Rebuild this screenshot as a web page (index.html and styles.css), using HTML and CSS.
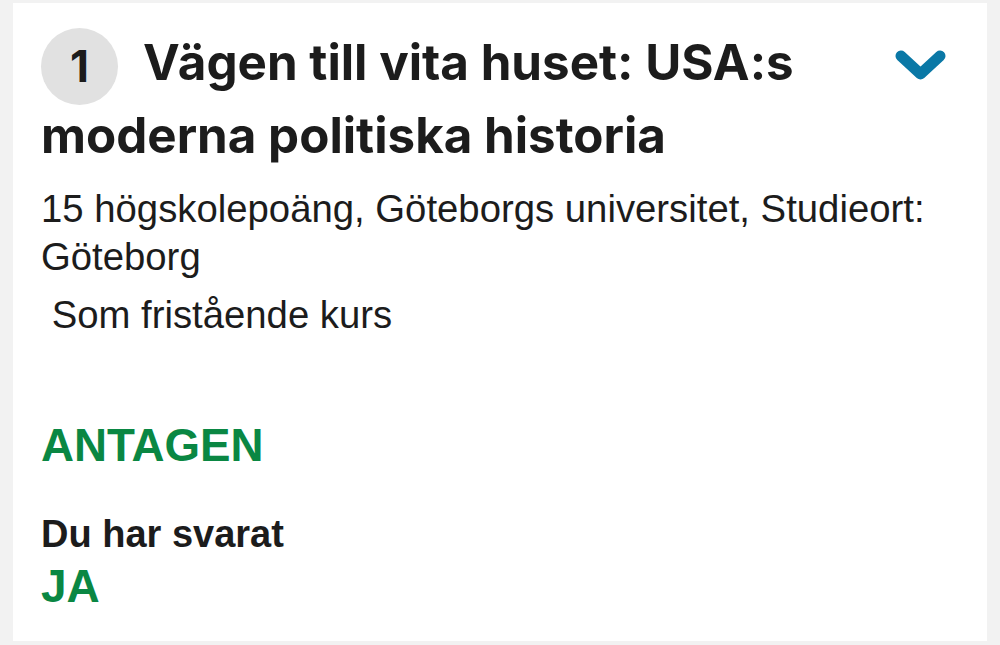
FILE: index.html
```html
<!DOCTYPE html>
<html lang="sv">
<head>
<meta charset="utf-8">
<link rel="stylesheet" href="styles.css">
</head>
<body>
<article class="card">
  <header class="card-head">
    <h1 class="title"><span class="rank">1</span>Vägen till vita huset: USA:s moderna politiska historia</h1>
    <svg class="chevron" width="52" height="32" viewBox="0 0 52 32" aria-hidden="true">
      <path d="M6 6 L25.5 24 L45 6" fill="none" stroke="#0a78a6" stroke-width="11" stroke-linecap="round" stroke-linejoin="round"/>
    </svg>
  </header>
  <p class="meta">15 högskolepoäng, Göteborgs universitet, Studieort: Göteborg</p>
  <p class="meta kind">&nbsp;Som fristående kurs</p>
  <p class="status">ANTAGEN</p>
  <p class="answer-label">Du har svarat</p>
  <p class="answer">JA</p>
</article>
</body>
</html>
```
FILE: styles.css
```css
html, body {
  margin: 0;
  padding: 0;
}
body {
  background: #f2f2f2;
  padding: 3px 13px 4px 13px;
  font-family: "Liberation Sans", Arial, sans-serif;
  color: #1c1c1c;
}
.card {
  background: #ffffff;
  height: 638px;
  box-sizing: border-box;
  padding: 23px 16px 0 28px;
}
.card-head {
  display: flex;
  align-items: flex-start;
  gap: 20px;
  padding-right: 24px;
}
.title {
  flex: 1;
  margin: 0;
  font-family: Inter, "Noto Sans", sans-serif;
  font-weight: 700;
  font-size: 49.3px;
  line-height: 73px;
  color: #1c1c1c;
}
.rank {
  display: inline-flex;
  align-items: center;
  justify-content: center;
  width: 77px;
  height: 77px;
  border-radius: 50%;
  background: #e1e1e1;
  font-size: 44px;
  vertical-align: middle;
  margin: -10px 25px -10px 0;
}
.chevron {
  margin-top: 24px;
  flex: none;
}
.meta {
  margin: 13px 0 0 0;
  font-size: 38.3px;
  line-height: 48px;
}
.kind {
  margin-top: 10px;
}
.status {
  margin: 81px 0 0 0;
  font-size: 45.7px;
  line-height: 52px;
  font-weight: 700;
  color: #0a8743;
}
.answer-label {
  margin: 40px 0 0 0;
  font-size: 38px;
  line-height: 44px;
  font-weight: 700;
}
.answer {
  margin: 4px 0 0 0;
  font-size: 46px;
  line-height: 52px;
  font-weight: 700;
  color: #0a8743;
}
```
